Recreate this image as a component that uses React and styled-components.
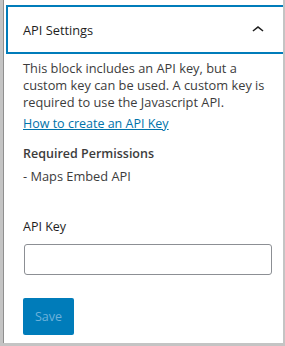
import React from "react";
import styled, { createGlobalStyle } from "styled-components";

const GlobalStyle = createGlobalStyle`
  * {
    box-sizing: border-box;
  }
  body {
    margin: 0;
    background: #ffffff;
    font-family: "Open Sans", "Noto Sans", sans-serif;
  }
`;

const App = () => {
  return (
    <>
      <GlobalStyle />
      <Frame>
        <Panel>
          <Toggle type="button">
            <Title>API Settings</Title>
            <svg width="24" height="24" viewBox="0 0 24 24">
              <path
                d="M6.5 12.4L12 8l5.5 4.4-.9 1.2L12 10l-4.6 3.6-1-1.2z"
                fill="#1e1e1e"
              />
            </svg>
          </Toggle>
          <Body>
            <Text>
              This block includes an API key, but a custom key can be used. A
              custom key is required to use the Javascript API.
            </Text>
            <HelpLink href="#">How to create an API Key</HelpLink>
            <Heading>Required Permissions</Heading>
            <Text>- Maps Embed API</Text>
            <Field>
              <Label>API Key</Label>
              <Input type="text" />
            </Field>
            <SaveButton disabled>Save</SaveButton>
          </Body>
        </Panel>
      </Frame>
    </>
  );
};
export default App;

const SaveButton = styled.button`
  width: 51px;
  height: 37px;
  border: 0;
  border-radius: 2px;
  background-color: #007cba;
  color: #6db2db;
  font-family: inherit;
  font-size: 12.5px;
  padding: 0;
`;
const Input = styled.input`
  display: block;
  width: 248px;
  height: 31px;
  margin-left: 1px;
  border: 1px solid #8c8f94;
  border-radius: 3px;
  outline: none;
`;
const Label = styled.div`
  font-size: 12.5px;
  line-height: 17px;
  color: #1e1e1e;
  margin-bottom: 9px;
`;
const Field = styled.div`
  margin-top: 33px;
  margin-bottom: 23px;
`;
const Heading = styled.div`
  font-size: 12.5px;
  line-height: 17px;
  font-weight: 600;
  color: #3c3c3c;
  margin-top: 13px;
  margin-bottom: 6px;
`;
const HelpLink = styled.a`
  display: block;
  font-size: 12.5px;
  line-height: 17px;
  color: #0073aa;
  text-decoration: underline;
  margin-top: 4px;
`;
const Text = styled.p`
  margin: 0;
  font-size: 12.8px;
  line-height: 17px;
  color: #3c3c3c;
`;
const Body = styled.div`
  padding: 6px 11px 0 19px;
`;
const Title = styled.span`
  font-size: 12.8px;
  font-weight: 500;
  color: #1e1e1e;
`;
const Toggle = styled.button`
  display: flex;
  align-items: center;
  justify-content: space-between;
  width: calc(100% - 2px);
  height: 49px;
  margin-left: 2px;
  padding: 0 13px 0 15px;
  background: #ffffff;
  border: 2px solid #007cba;
  border-right: 0;
  font-family: inherit;
  text-align: left;
`;
const Panel = styled.div`
  height: 100%;
  padding-top: 5px;
  border-left: 1px solid #8f8f8f;
`;
const Frame = styled.div`
  width: 285px;
  height: 346px;
  background: #ffffff;
  border-left: 3px solid #c4c4c4;
  border-right: 2px solid #c4c4c4;
  border-bottom: 3px solid #c4c4c4;
  overflow: hidden;
`;
